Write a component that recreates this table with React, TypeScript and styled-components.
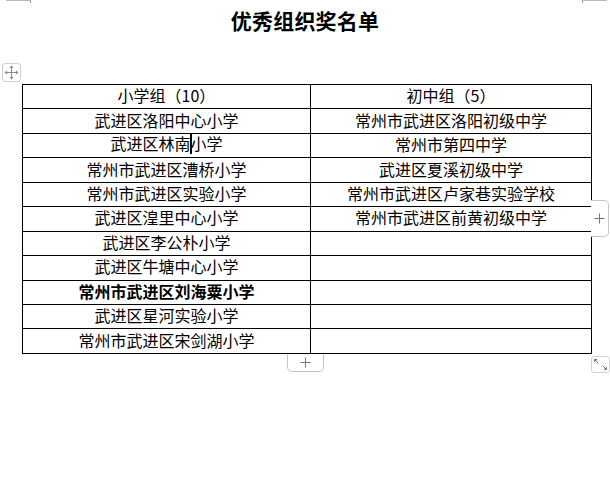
import React from "react";
import styled, { createGlobalStyle } from "styled-components";

const GlobalStyle = createGlobalStyle`
  html, body { margin: 0; padding: 0; background: #ffffff; }
  body { font-family: "Noto Sans CJK SC", "Liberation Sans", sans-serif; color: #000; }
`;

const Page = styled.div`
  width: 610px;
  height: 483px;
  display: flex;
  flex-direction: column;
  background: #fff;
  overflow: hidden;
`;

const CornerBar = styled.div`
  display: flex;
  justify-content: space-between;
  height: 3px;
`;

const CornerMark = styled.div<{ $side: "left" | "right" }>`
  width: 24px;
  height: 2px;
  border-top: 1px solid #b8b8b8;
  ${(p) => (p.$side === "left" ? "margin-left: 6px; border-right: 1px solid #999;" : "margin-right: 3px; border-left: 1px solid #999;")}
`;

const Title = styled.h1`
  margin: 5px 0 0;
  font-size: 21px;
  line-height: 24px;
  font-weight: 700;
  text-align: center;
  letter-spacing: 0.2px;
`;

const TableArea = styled.div`
  position: relative;
  margin: 52px 0 0 22px;
  width: 569px;
`;

const Table = styled.table`
  border-collapse: collapse;
  width: 569px;
  table-layout: fixed;
`;

const Cell = styled.td<{ $bold?: boolean }>`
  border: 1px solid #000;
  height: 20.45px;
  padding: 0 0 3px;
  text-align: center;
  vertical-align: middle;
  font-size: 16px;
  line-height: 18px;
  font-weight: ${(p) => (p.$bold ? 700 : 400)};
  white-space: nowrap;
`;

const Caret = styled.span`
  display: inline-block;
  width: 2px;
  height: 20px;
  margin: 0 -1px;
  background: #000;
  vertical-align: -4px;
`;

const MoveHandle = styled.div`
  position: absolute;
  left: -20px;
  top: -21px;
  width: 17px;
  height: 17px;
  border: 1px solid #cfcfcf;
  border-radius: 3px;
  background: #fff;
  display: flex;
  align-items: center;
  justify-content: center;
`;

const SideAdd = styled.div`
  position: absolute;
  left: 569px;
  top: 116px;
  width: 17px;
  height: 35px;
  border: 1px solid #c4c4c4;
  border-left: none;
  border-radius: 0 5px 5px 0;
  background: #fff;
  display: flex;
  align-items: center;
  justify-content: center;
`;

const BottomAdd = styled.div`
  position: absolute;
  left: 265px;
  top: 270px;
  width: 35px;
  height: 17px;
  border: 1px solid #c4c4c4;
  border-top: none;
  border-radius: 0 0 5px 5px;
  background: #fff;
  display: flex;
  align-items: center;
  justify-content: center;
`;

const ResizeHandle = styled.div`
  position: absolute;
  left: 569px;
  top: 272px;
  width: 17px;
  height: 15px;
  border: 1px solid #d2d2d2;
  border-radius: 3px;
  background: #fff;
  display: flex;
  align-items: center;
  justify-content: center;
`;

const PlusIcon = () => (
  <svg width="11" height="11" viewBox="0 0 11 11">
    <path d="M5.5 0.5V10.5M0.5 5.5H10.5" stroke="#777" strokeWidth="1" fill="none" />
  </svg>
);

const MoveIcon = () => (
  <svg width="15" height="15" viewBox="0 0 15 15">
    <path d="M7.5 2V13M2 7.5H13" stroke="#8a8a8a" strokeWidth="1" fill="none" />
    <path d="M7.5 0.5L5.5 3H9.5Z M7.5 14.5L5.5 12H9.5Z M0.5 7.5L3 5.5V9.5Z M14.5 7.5L12 5.5V9.5Z" fill="#8a8a8a" />
  </svg>
);

const ResizeIcon = () => (
  <svg width="15" height="13" viewBox="0 0 15 13">
    <path d="M2 2L5.5 5.5 M13 11L9.5 7.5" stroke="#777" strokeWidth="1" fill="none" />
    <path d="M1 1H4.5L1 4.5Z M14 12H10.5L14 8.5Z" fill="#777" />
  </svg>
);

const primary: { name: React.ReactNode; bold?: boolean }[] = [
  { name: "武进区洛阳中心小学" },
  { name: (<>武进区林南<Caret />小学</>) },
  { name: "常州市武进区漕桥小学" },
  { name: "常州市武进区实验小学" },
  { name: "武进区湟里中心小学" },
  { name: "武进区李公朴小学" },
  { name: "武进区牛塘中心小学" },
  { name: "常州市武进区刘海粟小学", bold: true },
  { name: "武进区星河实验小学" },
  { name: "常州市武进区宋剑湖小学" },
];

const middle = [
  "常州市武进区洛阳初级中学",
  "常州市第四中学",
  "武进区夏溪初级中学",
  "常州市武进区卢家巷实验学校",
  "常州市武进区前黄初级中学",
];

export default function App() {
  return (
    <>
      <GlobalStyle />
      <Page>
        <CornerBar>
          <CornerMark $side="left" />
          <CornerMark $side="right" />
        </CornerBar>
        <Title>优秀组织奖名单</Title>
        <TableArea>
          <MoveHandle>
            <MoveIcon />
          </MoveHandle>
          <Table>
            <colgroup>
              <col style={{ width: "288px" }} />
              <col style={{ width: "281px" }} />
            </colgroup>
            <tbody>
              <tr>
                <Cell>小学组（10）</Cell>
                <Cell>初中组（5）</Cell>
              </tr>
              {primary.map((p, i) => (
                <tr key={i}>
                  <Cell $bold={p.bold}>{p.name}</Cell>
                  <Cell>{middle[i] ?? ""}</Cell>
                </tr>
              ))}
            </tbody>
          </Table>
          <SideAdd>
            <PlusIcon />
          </SideAdd>
          <BottomAdd>
            <PlusIcon />
          </BottomAdd>
          <ResizeHandle>
            <ResizeIcon />
          </ResizeHandle>
        </TableArea>
      </Page>
    </>
  );
}
